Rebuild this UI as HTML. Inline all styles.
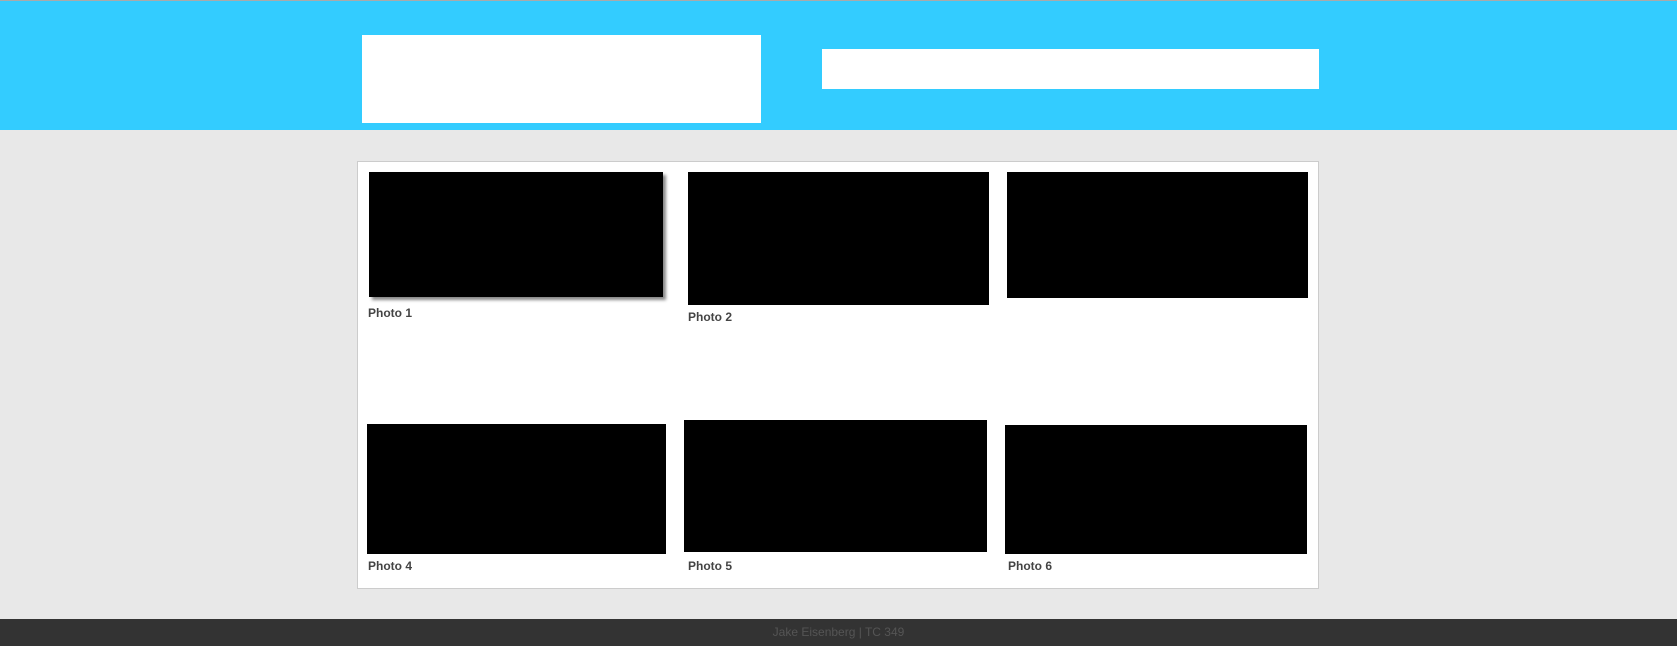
<!DOCTYPE html>
<html><head><style>
*{margin:0;padding:0}
body{width:1677px;height:646px;background:#e8e8e8;position:relative;overflow:hidden;font-family:"Liberation Sans",Arial,sans-serif}
div{position:absolute}
.b{background:#000}
.l{font-size:12px;font-weight:bold;color:#444;line-height:14px}
</style></head><body>
<div style="left:0;top:0;width:1677px;height:1px;background:#aaa"></div>
<div style="left:0;top:1px;width:1677px;height:129px;background:#33ccff"></div>
<div style="left:362px;top:35px;width:399px;height:88px;background:#fff"></div>
<div style="left:822px;top:49px;width:497px;height:40px;background:#fff"></div>
<div style="left:357px;top:161px;width:960px;height:426px;background:#fff;border:1px solid #ccc"></div>
<div class="b" style="left:369px;top:172px;width:294px;height:125px;box-shadow:3px 3px 3px #888"></div>
<div class="l" style="left:368px;top:306px">Photo 1</div>
<div class="b" style="left:688px;top:172px;width:301px;height:133px"></div>
<div class="l" style="left:688px;top:310px">Photo 2</div>
<div class="b" style="left:1007px;top:172px;width:301px;height:126px"></div>
<div class="b" style="left:367px;top:424px;width:299px;height:130px"></div>
<div class="l" style="left:368px;top:559px">Photo 4</div>
<div class="b" style="left:684px;top:420px;width:303px;height:132px"></div>
<div class="l" style="left:688px;top:559px">Photo 5</div>
<div class="b" style="left:1005px;top:425px;width:302px;height:129px"></div>
<div class="l" style="left:1008px;top:559px">Photo 6</div>
<div style="left:0;top:619px;width:1677px;height:27px;background:#333;color:#555;font-size:12px;text-align:center;line-height:27px">Jake Eisenberg | TC 349</div>
</body></html>
